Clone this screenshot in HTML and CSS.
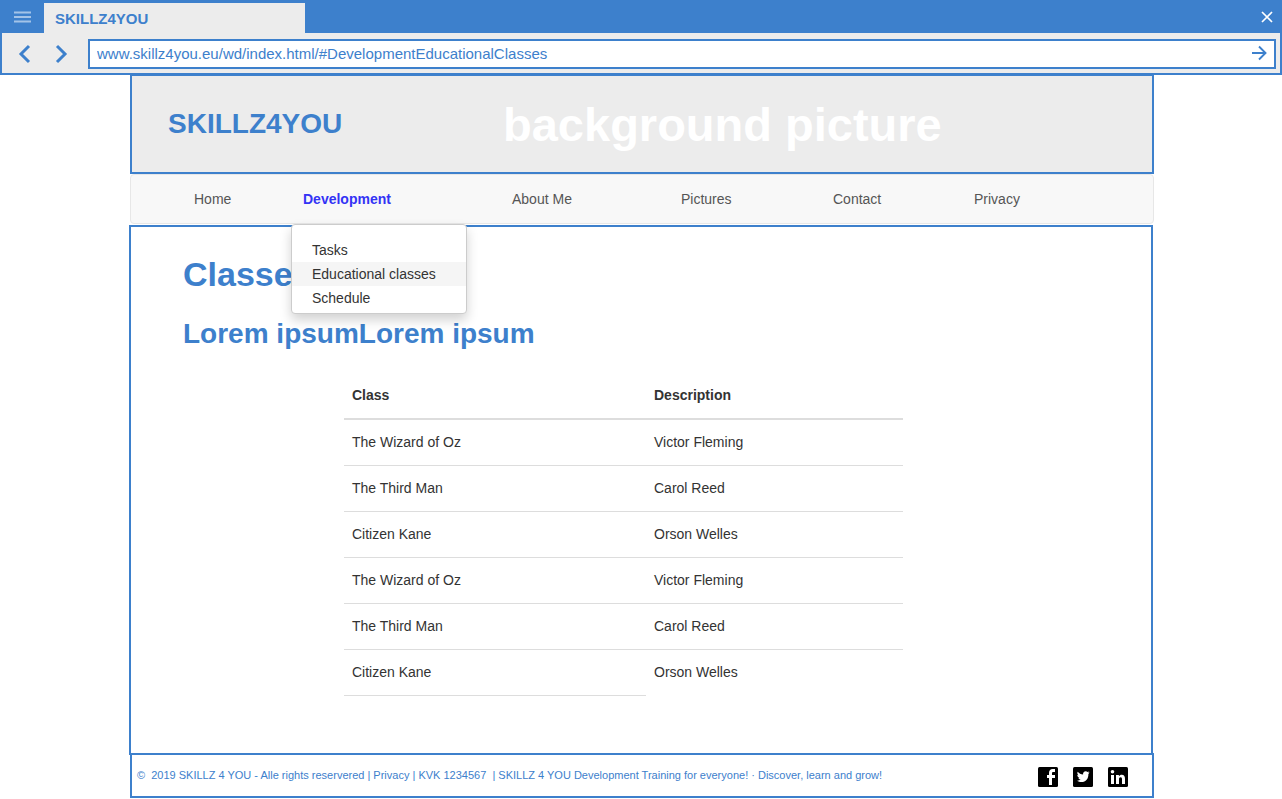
FILE: index.html
```html
<!DOCTYPE html>
<html lang="en">
<head>
<meta charset="utf-8">
<meta name="viewport" content="width=device-width, initial-scale=1">
<title>SKILLZ4YOU</title>
<link rel="stylesheet" href="styles.css">
</head>
<body>
<div class="browser">
  <div class="titlebar">
    <button class="icon-button menu-button" type="button" aria-label="Menu">
      <svg width="18" height="14" viewBox="0 0 18 14"><path d="M0 2.500h17M0 7h17M0 11.500h17" stroke="#a3c3e8" stroke-width="2" fill="none"/></svg>
    </button>
    <div class="tab">SKILLZ4YOU</div>
    <button class="icon-button close-button" type="button" aria-label="Close">
      <svg width="12" height="12" viewBox="0 0 12 12"><path d="M1 1l10 10M11 1L1 11" stroke="#fff" stroke-width="1.700" fill="none"/></svg>
    </button>
  </div>
  <div class="toolbar">
    <button class="icon-button" type="button" aria-label="Back">
      <svg width="12" height="18" viewBox="0 0 12 18"><path d="M10 2L2 10l8 8" stroke="#3d80cc" stroke-width="3" fill="none"/></svg>
    </button>
    <button class="icon-button" type="button" aria-label="Forward">
      <svg width="12" height="18" viewBox="0 0 12 18"><path d="M2 2l8 8l-8 8" stroke="#3d80cc" stroke-width="3" fill="none"/></svg>
    </button>
    <form class="address">
      <input class="address-input" type="text" aria-label="Address" value="www.skillz4you.eu/wd/index.html/#DevelopmentEducationalClasses">
      <button class="icon-button" type="button" aria-label="Go">
        <svg width="16" height="16" viewBox="0 0 16 16"><path d="M1 7h13M8 .5L14.500 7L8 13.500" stroke="#3d80cc" stroke-width="1.900" fill="none"/></svg>
      </button>
    </form>
  </div>
</div>

<div class="page">
  <header class="banner">
    <div class="brand">SKILLZ4YOU</div>
    <div class="banner-caption">background picture</div>
  </header>

  <nav class="nav" aria-label="Main">
    <ul class="nav-list">
      <li><a href="#home">Home</a></li>
      <li class="nav-open"><a class="active" href="#development">Development</a>
        <ul class="dropdown">
          <li><a href="#tasks">Tasks</a></li>
          <li><a class="selected" href="#classes">Educational classes</a></li>
          <li><a href="#schedule">Schedule</a></li>
        </ul>
      </li>
      <li><a href="#about">About Me</a></li>
      <li><a href="#pictures">Pictures</a></li>
      <li><a href="#contact">Contact</a></li>
      <li><a href="#privacy">Privacy</a></li>
    </ul>
  </nav>

  <main class="content">
    <h1>Classes</h1>
    <h2>Lorem ipsumLorem ipsum</h2>
    <table class="classes">
      <thead><tr><th class="class-column" scope="col">Class</th><th scope="col">Description</th></tr></thead>
      <tbody>
        <tr><td>The Wizard of Oz</td><td>Victor Fleming</td></tr>
        <tr><td>The Third Man</td><td>Carol Reed</td></tr>
        <tr><td>Citizen Kane</td><td>Orson Welles</td></tr>
        <tr><td>The Wizard of Oz</td><td>Victor Fleming</td></tr>
        <tr><td>The Third Man</td><td>Carol Reed</td></tr>
        <tr><td>Citizen Kane</td><td class="open-end">Orson Welles</td></tr>
      </tbody>
    </table>
  </main>

  <footer class="footer">
    <p class="legal">©&nbsp; 2019 SKILLZ 4 YOU - Alle rights reservered | Privacy | KVK 1234567&nbsp; | SKILLZ 4 YOU Development Training for everyone! · Discover, learn and grow!</p>
    <div class="social">
      <a href="#facebook" aria-label="Facebook"><svg width="20" height="20" viewBox="0 0 20 20"><rect width="20" height="20" rx="1.500"/><path d="M11 18v-7H9V8h2V6c0-2.700 1.500-4 3.700-4H17v3h-1.500C14.400 5 14 5.500 14 6.400V8h3v3h-3v7z" fill="#fff"/></svg></a>
      <a href="#twitter" aria-label="Twitter"><svg width="20" height="20" viewBox="0 0 20 20"><rect width="20" height="20" rx="1.500"/><path d="M4 13.700c1.400.1 2.700-.3 3.800-1.100-1.200 0-2.200-.8-2.500-1.900h1.200C5.200 10.400 4.300 9.300 4.300 8l1.200.3C4.300 7.400 4 5.900 4.700 4.800c1.300 1.600 3.200 2.600 5.400 2.700-.4-1.800 1-3.200 2.600-3.200.8 0 1.400.3 1.900.8l1.700-.6-1.100 1.400 1.500-.4-1.300 1.400C15.500 11.700 12.800 15 8.500 15c-1.700 0-3.200-.5-4.500-1.300z" fill="#fff"/></svg></a>
      <a href="#linkedin" aria-label="LinkedIn"><svg width="20" height="20" viewBox="0 0 20 20"><rect width="20" height="20" rx="1.500"/><circle cx="4.500" cy="4.700" r="1.800" fill="#fff"/><path d="M3 8h3v9H3zM8 8h2.900v1.200C11.500 8.300 12.500 7.700 13.700 7.700c2.600 0 3.300 1.700 3.300 4.200V17h-3v-4.700c0-1.200-.3-2-1.400-2-1.200 0-1.600.9-1.600 2.100V17H8z" fill="#fff"/></svg></a>
    </div>
  </footer>
</div>
</body>
</html>
```
FILE: styles.css
```css
* { box-sizing: border-box; }

body {
  margin: 0;
  background: #fff;
  color: #333;
  font-family: "Liberation Sans", Arial, sans-serif;
  font-size: 14px;
  line-height: 20px;
}

h1, h2, p, ul { margin: 0; padding: 0; }
ul { list-style: none; }
a { color: inherit; text-decoration: none; }
svg { display: block; overflow: visible; }

.icon-button {
  display: block;
  padding: 0;
  border: 0;
  background: none;
  cursor: pointer;
}

/* Browser frame */
.titlebar {
  display: flex;
  align-items: center;
  height: 33px;
  background: #3d80cc;
}

.menu-button { width: 44px; padding-left: 14px; }

.tab {
  width: 261px;
  height: 30px;
  margin-top: 3px;
  padding-left: 11px;
  background: #ececec;
  color: #3d80cc;
  font-size: 15px;
  font-weight: bold;
  line-height: 32px;
}

.close-button { margin-left: auto; padding-right: 9px; }

.toolbar {
  display: flex;
  align-items: center;
  gap: 24px;
  height: 42px;
  padding: 0 4px 0 17px;
  border: 2px solid #3d80cc;
  border-top: 0;
  background: #ececec;
}

.address {
  display: flex;
  flex: 1;
  align-items: center;
  height: 30px;
  margin: 2px 0 0 -3px;
  padding: 0 7px;
  border: 2px solid #3d80cc;
  background: #fff;
}

.address-input {
  flex: 1;
  min-width: 0;
  padding: 0;
  border: 0;
  outline: 0;
  background: none;
  color: #3d80cc;
  font: inherit;
  font-size: 15px;
}

/* Page */
.page { max-width: 1026px; margin: 0 auto; }

.banner {
  display: flex;
  align-items: center;
  height: 100px;
  margin: -1px 0 0 2px;
  padding: 0 36px;
  border: 2px solid #3d80cc;
  background: #ececec;
  font-weight: bold;
}

.brand { width: 335px; color: #3d80cc; font-size: 28px; }
.banner-caption { padding-top: 2px; color: #fff; font-size: 47px; line-height: 60px; }

.nav {
  margin: 0 0 1px 2px;
  padding: 14px 0 14px 63px;
  border: 1px solid #e7e7e7;
  border-radius: 4px;
  background: #f8f8f8;
  color: #555;
}

.nav-list {
  display: grid;
  grid-template-columns: 109fr 209fr 169fr 152fr 141fr 179fr;
}

.nav-open { position: relative; }
.active { color: #3333f5; font-weight: bold; }

.dropdown {
  position: absolute;
  top: 35px;
  left: -12px;
  width: 176px;
  padding: 13px 0 3px;
  border: 1px solid #ccc;
  border-radius: 4px;
  background: #fff;
  box-shadow: 0 6px 12px rgba(0, 0, 0, 0.18);
  color: #333;
}

.dropdown a { display: block; padding-left: 20px; line-height: 24px; }
.dropdown .selected { background: #f5f5f5; }

.content {
  margin: 0 1px;
  padding: 27px 52px 57px;
  border: 2px solid #3d80cc;
}

h1, h2 { color: #3d80cc; }
h1 { margin-bottom: 24px; font-size: 34px; line-height: 40px; }
h2 { margin-bottom: 22px; font-size: 28px; line-height: 32px; }

.classes {
  width: 559px;
  max-width: 100%;
  margin-left: 161px;
  border-collapse: separate;
  border-spacing: 0;
  text-align: left;
}

.classes th, .classes td { padding: 12px 8px 13px; border-bottom: 1px solid #ddd; }
.classes th { padding: 13px 8px; border-bottom-width: 2px; }
.classes .open-end { border-bottom-color: transparent; }
.class-column { width: 302px; }

.footer {
  display: flex;
  align-items: center;
  justify-content: space-between;
  height: 45px;
  margin: -2px 0 1px 2px;
  padding: 0 24px 0 5px;
  border: 2px solid #3d80cc;
  background: #fff;
}

.legal { padding-bottom: 2px; color: #3d80cc; font-size: 11px; }
.social { display: flex; gap: 15px; padding-top: 2px; }
```
